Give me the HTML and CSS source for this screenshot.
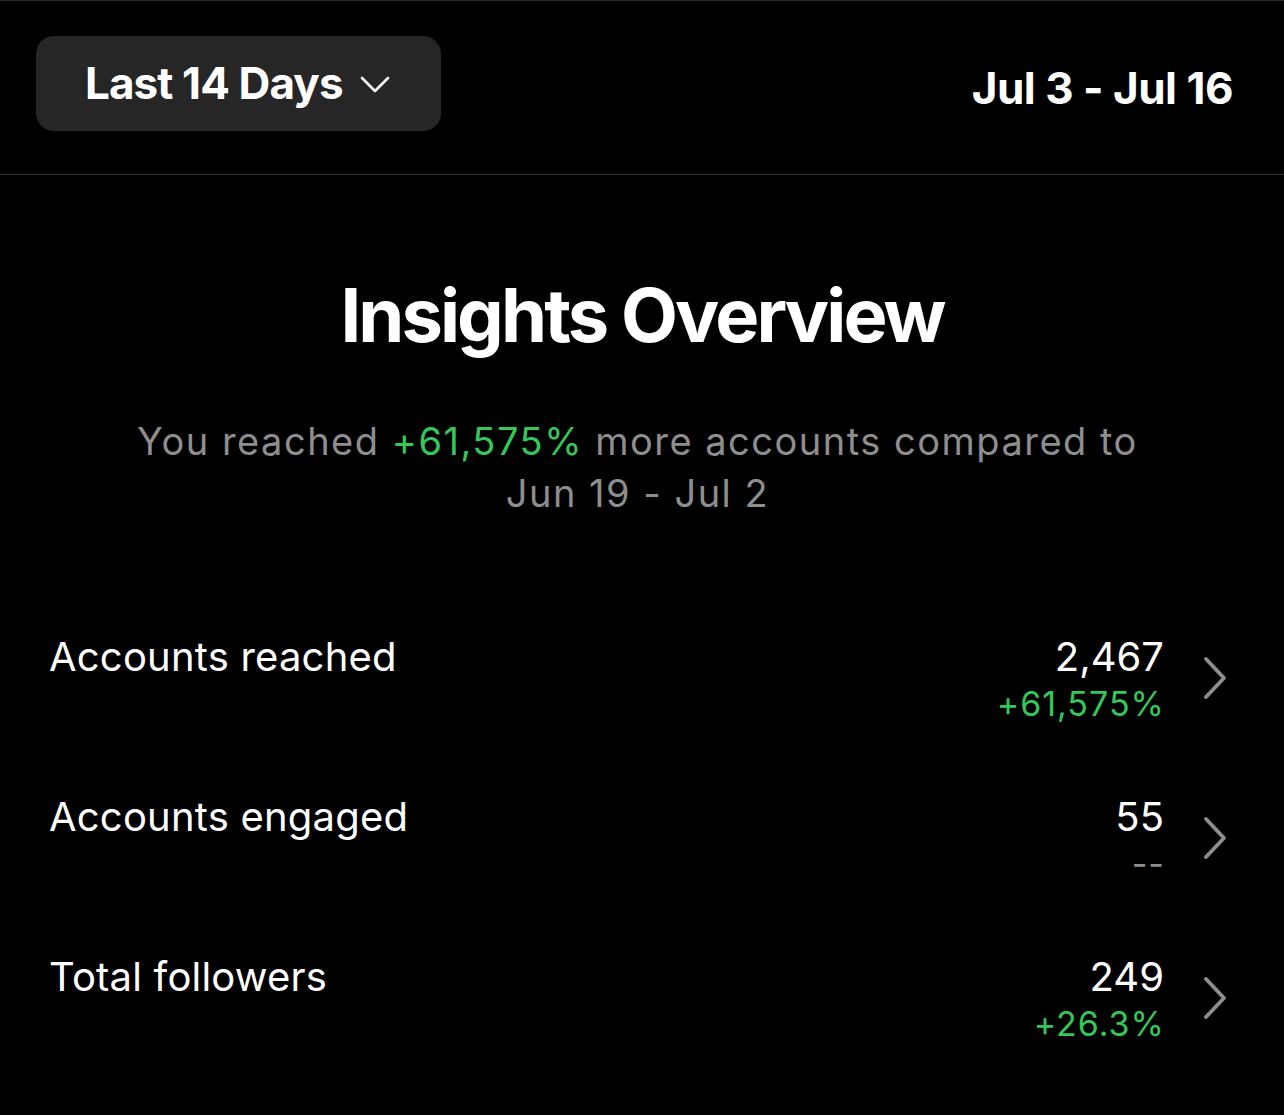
FILE: index.html
```html
<!DOCTYPE html>
<html lang="en">
<head>
<meta charset="utf-8">
<title>Insights Overview</title>
<link rel="stylesheet" href="styles.css">
</head>
<body>
<header class="topbar">
  <button class="range-btn">
    <span class="range-label">Last 14 Days</span>
    <svg class="range-caret" width="30" height="18" viewBox="0 0 30 18" aria-hidden="true">
      <path d="M2 2 L15 15 L28 2" fill="none" stroke="#fff" stroke-width="2.6" stroke-linecap="round" stroke-linejoin="round"/>
    </svg>
  </button>
  <div class="range-dates">Jul 3 - Jul 16</div>
</header>

<main class="overview">
  <h1 class="title">Insights Overview</h1>
  <p class="summary">You reached <span class="up">+61,575%</span> more accounts compared to<br>Jun 19 - Jul 2</p>

  <ul class="metrics">
    <li class="metric">
      <span class="metric-label">Accounts reached</span>
      <span class="metric-values">
        <span class="metric-num">2,467</span>
        <span class="metric-delta up">+61,575%</span>
      </span>
      <svg class="chev" width="24" height="44" viewBox="0 0 24 44" aria-hidden="true">
        <path d="M3 3 L21 22 L3 41" fill="none" stroke="#8e8e8e" stroke-width="3.8" stroke-linecap="round" stroke-linejoin="round"/>
      </svg>
    </li>
    <li class="metric">
      <span class="metric-label">Accounts engaged</span>
      <span class="metric-values">
        <span class="metric-num">55</span>
        <span class="metric-delta none">--</span>
      </span>
      <svg class="chev" width="24" height="44" viewBox="0 0 24 44" aria-hidden="true">
        <path d="M3 3 L21 22 L3 41" fill="none" stroke="#8e8e8e" stroke-width="3.8" stroke-linecap="round" stroke-linejoin="round"/>
      </svg>
    </li>
    <li class="metric">
      <span class="metric-label">Total followers</span>
      <span class="metric-values">
        <span class="metric-num">249</span>
        <span class="metric-delta up">+26.3%</span>
      </span>
      <svg class="chev" width="24" height="44" viewBox="0 0 24 44" aria-hidden="true">
        <path d="M3 3 L21 22 L3 41" fill="none" stroke="#8e8e8e" stroke-width="3.8" stroke-linecap="round" stroke-linejoin="round"/>
      </svg>
    </li>
  </ul>
</main>
</body>
</html>
```

FILE: styles.css
```css
* { box-sizing: border-box; }

html, body {
  margin: 0;
  padding: 0;
  background: #000;
  color: #fff;
  font-family: Inter, "Noto Sans", "DejaVu Sans", sans-serif;
}

.topbar {
  display: flex;
  justify-content: space-between;
  align-items: flex-start;
  height: 175px;
  padding: 35px 51px 0 36px;
  border-top: 1px solid #2a2a2a;
  border-bottom: 1px solid #3a3a3a;
}

.range-btn {
  display: flex;
  align-items: center;
  width: 405px;
  height: 95px;
  padding: 0 0 0 49px;
  border: 0;
  border-radius: 18px;
  background: #262626;
  color: #fff;
  font-family: inherit;
  font-size: 44px;
  font-weight: 700;
  line-height: 95px;
  letter-spacing: -0.9px;
  cursor: pointer;
}

.range-caret {
  margin-left: 17px;
  margin-top: 2px;
}

.range-dates {
  margin-top: 26px;
  font-size: 44px;
  font-weight: 700;
  line-height: 53px;
  letter-spacing: -0.5px;
}

.overview {
  display: flex;
  flex-direction: column;
  align-items: center;
}

.title {
  margin: 96px 0 0;
  font-size: 74px;
  font-weight: 700;
  line-height: 89px;
  letter-spacing: -2.9px;
  text-align: center;
}

.summary {
  margin: 55px 0 0;
  padding-right: 9px;
  font-size: 38px;
  line-height: 52px;
  letter-spacing: 1.5px;
  color: #8e8e8e;
  text-align: center;
}

.up { color: #34c759; }

.metrics {
  list-style: none;
  margin: 114px 0 0;
  padding: 0 57px 0 49px;
  width: 100%;
}

.metric {
  display: flex;
  align-items: flex-start;
  height: 160px;
}

.metric-label {
  flex: 1;
  font-size: 40px;
  line-height: 48px;
  letter-spacing: 0.2px;
}

.metric-values {
  display: flex;
  flex-direction: column;
  align-items: flex-end;
}

.metric-num {
  font-size: 40px;
  line-height: 48px;
}

.metric-delta {
  font-size: 34px;
  line-height: 46px;
  letter-spacing: 1px;
  margin-right: -1px;
}

.metric-delta.none { color: #8e8e8e; }

.chev {
  margin: 23px 0 0 39px;
  flex: none;
}
```
